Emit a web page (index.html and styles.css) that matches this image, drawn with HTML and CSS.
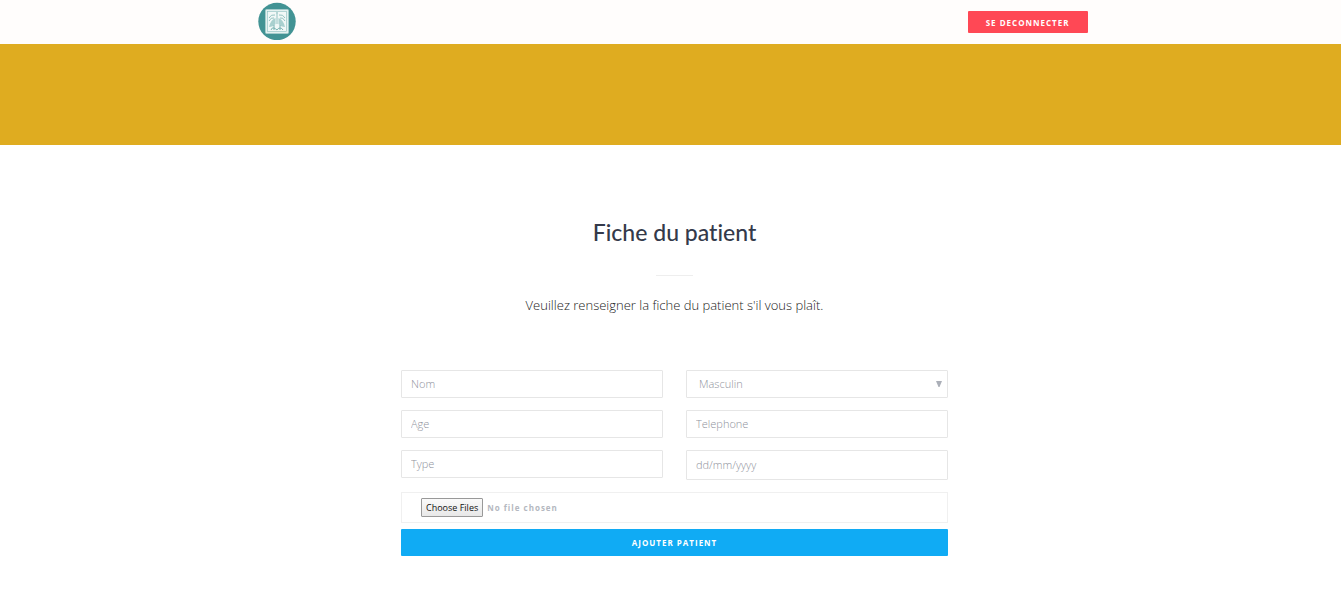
FILE: index.html
```html
<!DOCTYPE html>
<html lang="fr">
<head>
<meta charset="utf-8">
<title>Fiche du patient</title>
<link rel="stylesheet" href="styles.css">
</head>
<body>
<header class="topbar">
  <div class="topbar-inner">
    <a class="logo" href="#" aria-label="Accueil">
      <svg viewBox="0 0 38 38" width="38" height="38" aria-hidden="true">
        <circle cx="19" cy="19.5" r="18.7" fill="#429394"/>
        <rect x="7.5" y="7.5" width="23" height="24" rx="1" fill="#e4f1f0" stroke="#a5cccb"/>
        <rect x="9.5" y="9.5" width="19" height="20" fill="#f1f8f7" stroke="#8dbfbe" stroke-width=".6"/>
        <g fill="none" stroke="#8abcbb" stroke-width=".9">
          <path d="M19 12v10"/>
          <path d="M11 16q2-4 6-3M27 16q-2-4-6-3"/>
          <path d="M11 19q2-4 5-3M27 19q-2-4-5-3"/>
        </g>
        <path d="M17.500 16q-5 2-6.500 9q4 0 6.500-3zM20.500 16q5 2 6.500 9q-4 0-6.500-3z" fill="#a9d0cf"/>
        <path d="M13 28q1-3 3-2t3 2q1-2 3-2t3 2M16 23v5M22 23v5M18 11h2" fill="none" stroke="#6dabaa" stroke-width=".9"/>
      </svg>
    </a>
    <button class="btn btn-logout" type="button">SE DECONNECTER</button>
  </div>
</header>
<div class="banner"></div>
<main class="content">
  <h1 class="title">Fiche du patient</h1>
  <div class="divider"></div>
  <p class="lead">Veuillez renseigner la fiche du patient s'il vous plaît.</p>
  <form class="form">
    <div class="columns">
      <div class="column">
        <input class="field" type="text" placeholder="Nom" aria-label="Nom">
        <input class="field" type="text" placeholder="Age" aria-label="Age">
        <input class="field" type="text" placeholder="Type" aria-label="Type">
      </div>
      <div class="column">
        <div class="select-wrap">
          <select class="field field-select" aria-label="Sexe">
            <option>Masculin</option>
            <option>Feminin</option>
          </select>
          <svg class="arrow" viewBox="0 0 6 6" width="6" height="6" aria-hidden="true"><path d="M0 0h6L3.500 6h-1z" fill="#abafb8"/></svg>
        </div>
        <input class="field" type="tel" placeholder="Telephone" aria-label="Telephone">
        <input class="field field-date" type="text" placeholder="dd/mm/yyyy" aria-label="Date">
      </div>
    </div>
    <input class="file" type="file" multiple aria-label="Fichiers">
    <button class="btn btn-submit" type="submit">AJOUTER PATIENT</button>
  </form>
</main>
</body>
</html>
```
FILE: styles.css
```css
* {
  box-sizing: border-box;
}

body {
  margin: 0;
  background: #fff;
  color: #343a4a;
  font-family: "Open Sans", sans-serif;
}

.topbar {
  background: #fffdfc;
  padding: 0 16px 0 20px;
}

.topbar-inner {
  display: flex;
  align-items: center;
  justify-content: space-between;
  max-width: 830px;
  height: 44px;
  margin: 0 auto;
}

.logo {
  display: block;
  height: 38px;
  margin-bottom: 2px;
}

.logo svg {
  display: block;
}

.btn {
  border: 0;
  border-radius: 1px;
  color: #fff;
  font-family: inherit;
  font-weight: 700;
  font-size: 8px;
  letter-spacing: 1px;
  text-align: center;
}

.btn-logout {
  height: 22px;
  padding: 0 18px;
  background: #ff4855;
}

.banner {
  height: 101px;
  background: #dfac20;
}

.content {
  display: flex;
  flex-direction: column;
  align-items: center;
  padding: 70px 16px 56px 24px;
}

.title {
  margin: 0;
  font-family: Lato, sans-serif;
  font-size: 23px;
  font-weight: 500;
  font-variant-ligatures: none;
  line-height: 34px;
}

.divider {
  width: 37px;
  height: 1px;
  margin: 26px 0 19px;
  background: #eee;
}

.lead {
  margin: 0 0 55px;
  color: #222;
  font-size: 13px;
  font-weight: 300;
  line-height: 20px;
}

.form {
  display: flex;
  flex-direction: column;
  width: 100%;
  max-width: 547px;
}

.columns {
  display: grid;
  grid-template-columns: 1fr 1fr;
  gap: 23px;
}

.column {
  display: flex;
  flex-direction: column;
  gap: 12px;
}

.field {
  width: 100%;
  height: 28px;
  padding: 0 9px 2px;
  border: 1px solid #e6e6e6;
  border-radius: 1px;
  background: #fff;
  color: #8f929c;
  font-family: inherit;
  font-size: 11px;
  font-weight: 300;
}

.field::placeholder {
  color: #8f929c;
  opacity: 1;
}

.select-wrap {
  position: relative;
  height: 28px;
}

.field-select {
  appearance: none;
  padding: 0 12px 2px;
}

.arrow {
  position: absolute;
  top: 11px;
  right: 6px;
  pointer-events: none;
}

.field-date {
  height: 30px;
}

.file {
  height: 31px;
  margin: 12px 0 6px;
  padding: 5px 19px;
  border: 1px solid #f0f0f0;
  color: #b4b8c0;
  font-family: inherit;
  font-size: 8px;
  font-weight: 700;
  letter-spacing: 1px;
  line-height: 19px;
}

.file::file-selector-button {
  height: 19px;
  margin: 0 4px 0 0;
  padding: 0 4px;
  border: 1px solid #999;
  border-radius: 1px;
  background: linear-gradient(#fafafa, #e8e8e8);
  color: #111;
  font-family: inherit;
  font-size: 9px;
  font-weight: 400;
  letter-spacing: 0;
}

.btn-submit {
  height: 27px;
  background: #10abf4;
}
```
